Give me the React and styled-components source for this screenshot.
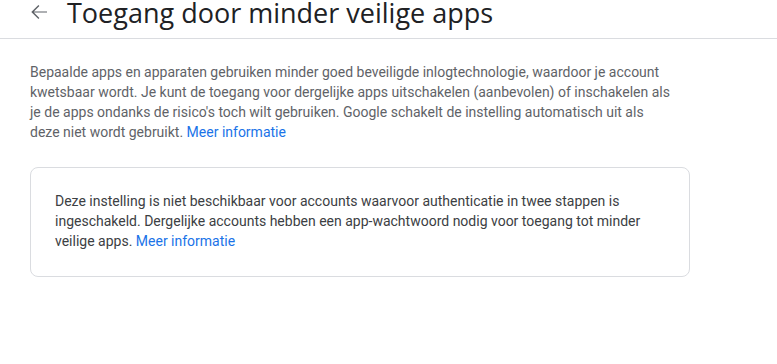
import React from 'react';
import styled, { createGlobalStyle } from 'styled-components';

const GlobalStyle = createGlobalStyle`
	body {
		margin: 0;
		background: #fff;
		font-family: Roboto, "Liberation Sans", sans-serif;
		overflow: hidden;
	}
`;

const Header = styled.header`
	display: flex;
	align-items: center;
	gap: 16px;
	height: 52px;
	margin-top: -14px;
	padding-left: 27px;
	border-bottom: 1px solid #dadce0;
`;

const BackButton = styled.button`
	display: flex;
	align-items: center;
	justify-content: center;
	width: 24px;
	height: 24px;
	padding: 0;
	border: none;
	background: none;
	color: #5f6368;
	cursor: pointer;
`;

const Title = styled.h1`
	margin: 0;
	font-family: "Open Sans", sans-serif;
	font-size: 27px;
	font-weight: 400;
	color: #202124;
	white-space: nowrap;
`;

const Main = styled.main`
	width: 660px;
	padding: 23px 0 0 30px;
`;

const Intro = styled.p`
	max-width: 640px;
	margin: 0 0 25px;
	font-size: 14px;
	line-height: 20px;
	color: #5f6368;
`;

const Link = styled.a`
	color: #1a73e8;
	text-decoration: none;
`;

const Notice = styled.div`
	border: 1px solid #dadce0;
	border-radius: 8px;
	padding: 23px 24px 25px;
	font-size: 14px;
	line-height: 20px;
	color: #3c4043;
`;

const BackArrow = () => (
	<svg width="24" height="24" viewBox="0 0 24 24" fill="currentColor">
		<path d="M20 11.4H6.9l5.5-5.5-1-1L4.3 12l7.1 7.1 1-1-5.5-5.5H20z" />
	</svg>
);

const App = () => (
	<>
		<GlobalStyle />
		<Header>
			<BackButton aria-label="Terug"><BackArrow /></BackButton>
			<Title>Toegang door minder veilige apps</Title>
		</Header>
		<Main>
			<Intro>
				Bepaalde apps en apparaten gebruiken minder goed beveiligde inlogtechnologie, waardoor je account
				kwetsbaar wordt. Je kunt de toegang voor dergelijke apps uitschakelen (aanbevolen) of inschakelen als
				je de apps ondanks de risico's toch wilt gebruiken. Google schakelt de instelling automatisch uit als
				deze niet wordt gebruikt. <Link href="#">Meer informatie</Link>
			</Intro>
			<Notice>
				Deze instelling is niet beschikbaar voor accounts waarvoor authenticatie in twee stappen is
				ingeschakeld. Dergelijke accounts hebben een app-wachtwoord nodig voor toegang tot minder
				veilige apps. <Link href="#">Meer informatie</Link>
			</Notice>
		</Main>
	</>
);

export default App;
